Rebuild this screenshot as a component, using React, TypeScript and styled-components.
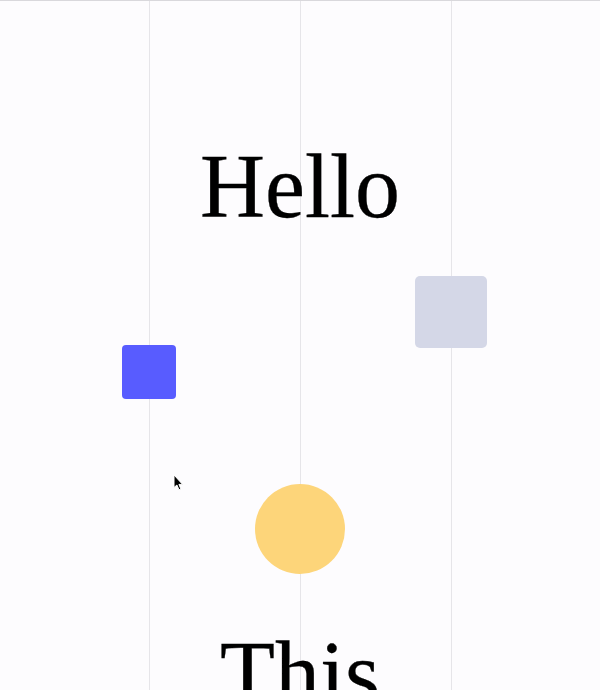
import React from "react";
import styled, { createGlobalStyle } from "styled-components";

const Global = createGlobalStyle`
  html, body { margin: 0; padding: 0; background: #fdfcfe; }
  body { overflow: hidden; font-family: "Liberation Serif", "Times New Roman", serif; }
`;

const Stage = styled.div`
  position: relative;
  width: 600px;
  height: 690px;
  overflow: hidden;
  box-sizing: border-box;
  border-top: 1px solid #d9d8dc;
  background-color: #fdfcfe;
  background-image:
    linear-gradient(#e6e5e9, #e6e5e9),
    linear-gradient(#e6e5e9, #e6e5e9),
    linear-gradient(#e6e5e9, #e6e5e9);
  background-size: 1px 100%;
  background-repeat: no-repeat;
  background-position: 149px 0, 300px 0, 451px 0;
  display: flex;
  flex-direction: column;
`;

const Title = styled.h1<{ $top: number }>`
  margin: ${(p) => p.$top}px 0 0;
  font-family: "Liberation Serif", "Times New Roman", serif;
  font-weight: 400;
  font-size: 90px;
  line-height: 90px;
  color: #000;
  text-align: center;
  white-space: nowrap;
  -webkit-text-stroke: 0.3px #000;
`;

const Columns = styled.div`
  display: grid;
  grid-template-columns: repeat(3, 1fr);
  padding: 0 74px;
  align-items: start;
  justify-items: center;
`;

const Shape = styled.div<{ $size: number; $color: string; $radius: string; $offset: number }>`
  width: ${(p) => p.$size}px;
  height: ${(p) => p.$size}px;
  background: ${(p) => p.$color};
  border-radius: ${(p) => p.$radius};
  margin-top: ${(p) => p.$offset}px;
`;

const Cursor = styled.svg`
  position: absolute;
  left: 173px;
  top: 473px;
  width: 11px;
  height: 17px;
`;

export default function App() {
  return (
    <>
      <Global />
      <Stage>
        <Title $top={141}>Hello</Title>
        <Columns>
          <Shape $size={54} $color="#585cff" $radius="4px" $offset={113} />
          <Shape $size={90} $color="#fdd57a" $radius="50%" $offset={252} />
          <Shape $size={72} $color="#d4d7e7" $radius="5px" $offset={44} />
        </Columns>
        <Title $top={55}>This</Title>
        <Cursor viewBox="0 0 11 17">
          <path
            d="M1 1 L1 13.5 L3.9 11 L6 15.8 L7.9 15 L5.9 10.4 L9.6 10.4 Z"
            fill="#000"
            stroke="#fff"
            strokeWidth="1"
            strokeLinejoin="round"
          />
        </Cursor>
      </Stage>
    </>
  );
}
